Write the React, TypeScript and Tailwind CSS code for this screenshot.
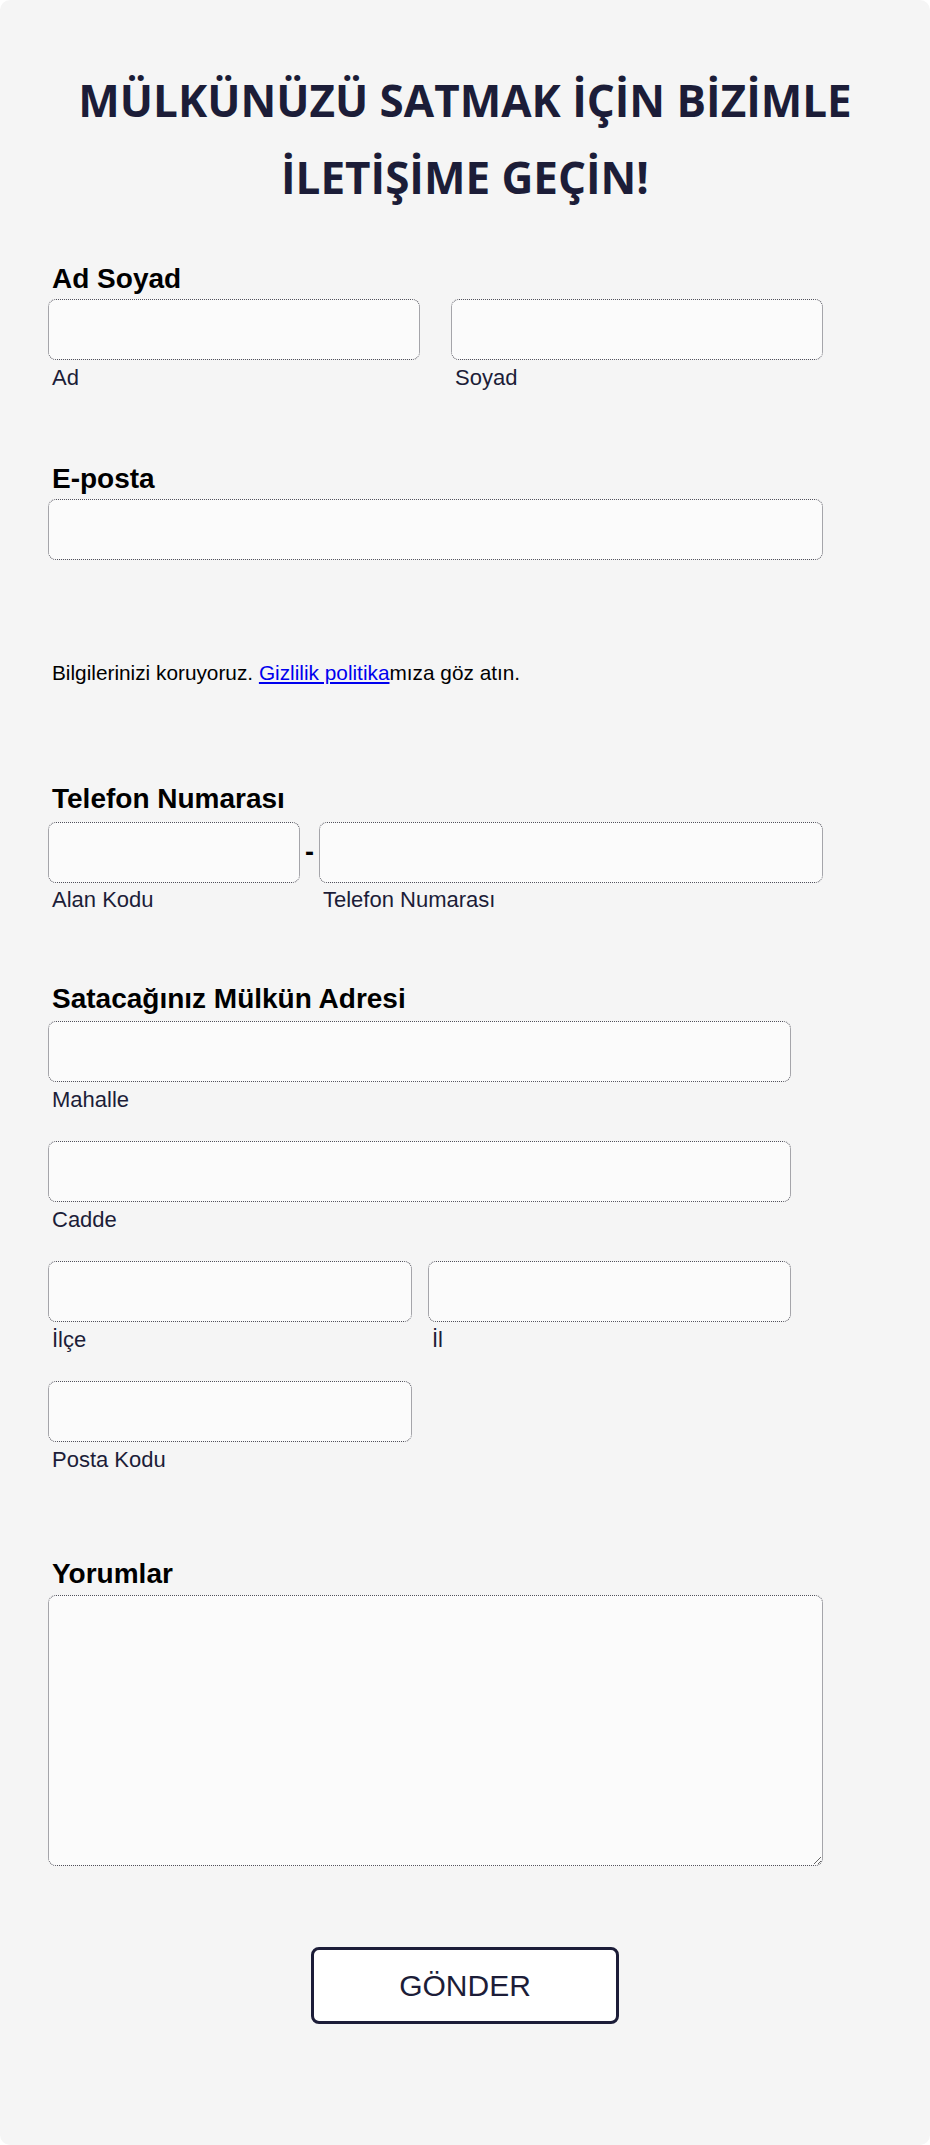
import React from "react";

const inputCls =
  "block bg-[#fbfbfb] border border-dotted border-[#50505a] rounded-[8px] outline-none";

function Label({ children, className = "" }: { children: React.ReactNode; className?: string }) {
  return (
    <div className={"pl-[4px] text-[28px] leading-[32px] font-bold text-black " + className}>
      {children}
    </div>
  );
}

function Sub({ children, className = "" }: { children: React.ReactNode; className?: string }) {
  return (
    <div className={"pl-[4px] text-[22px] leading-[25px] text-[#1c1d38] " + className}>
      {children}
    </div>
  );
}

export default function App() {
  return (
    <div className="bg-white w-[930px]" style={{ fontFamily: '"Liberation Sans", Arial, sans-serif' }}>
      <div className="bg-[#f5f5f5] rounded-[10px] w-[930px] h-[2145px] pt-[62px]">
        <h1
          className="text-center text-[44px] leading-[77px] font-bold text-[#1c1d38]"
          style={{ fontFamily: '"Open Sans", "Noto Sans", sans-serif' }}
        >
          MÜLKÜNÜZÜ SATMAK İÇİN BİZİMLE
          <br />
          İLETİŞİME GEÇİN!
        </h1>

        <div className="pl-[48px]">
          {/* Ad Soyad */}
          <Label className="mt-[47px]">Ad Soyad</Label>
          <div className="mt-[4px] flex gap-[31px] w-[775px]">
            <div className="w-[372px]">
              <input className={inputCls + " w-[372px] h-[61px]"} />
              <Sub className="mt-[5px]">Ad</Sub>
            </div>
            <div className="w-[372px]">
              <input className={inputCls + " w-[372px] h-[61px]"} />
              <Sub className="mt-[5px]">Soyad</Sub>
            </div>
          </div>

          {/* E-posta */}
          <Label className="mt-[73px]">E-posta</Label>
          <input className={inputCls + " mt-[4px] w-[775px] h-[61px]"} />

          <p className="mt-[101px] pl-[4px] text-[20.8px] leading-[24px] text-black">
            Bilgilerinizi koruyoruz.{" "}
            <a href="#" className="text-[#0000ee] underline">
              Gizlilik politika
            </a>
            mıza göz atın.
          </p>

          {/* Telefon */}
          <Label className="mt-[98px]">Telefon Numarası</Label>
          <div className="mt-[7px] flex w-[775px]">
            <div className="w-[252px]">
              <input className={inputCls + " w-[252px] h-[61px]"} />
              <Sub className="mt-[4px]">Alan Kodu</Sub>
            </div>
            <div className="w-[19px] h-[61px] flex items-center justify-center text-[27px] font-bold text-black">
              -
            </div>
            <div className="w-[504px]">
              <input className={inputCls + " w-[504px] h-[61px]"} />
              <Sub className="mt-[4px]">Telefon Numarası</Sub>
            </div>
          </div>

          {/* Adres */}
          <Label className="mt-[71px]">Satacağınız Mülkün Adresi</Label>
          <input className={inputCls + " mt-[6px] w-[743px] h-[61px]"} />
          <Sub className="mt-[5px]">Mahalle</Sub>
          <input className={inputCls + " mt-[29px] w-[743px] h-[61px]"} />
          <Sub className="mt-[5px]">Cadde</Sub>
          <div className="mt-[29px] flex gap-[16px] w-[743px]">
            <div className="w-[364px]">
              <input className={inputCls + " w-[364px] h-[61px]"} />
              <Sub className="mt-[5px]">İlçe</Sub>
            </div>
            <div className="w-[363px]">
              <input className={inputCls + " w-[363px] h-[61px]"} />
              <Sub className="mt-[5px]">İl</Sub>
            </div>
          </div>
          <input className={inputCls + " mt-[29px] w-[364px] h-[61px]"} />
          <Sub className="mt-[5px]">Posta Kodu</Sub>

          {/* Yorumlar */}
          <Label className="mt-[86px]">Yorumlar</Label>
          <textarea className={inputCls + " mt-[5px] w-[775px] h-[271px] resize"} />
        </div>

        <div className="mt-[81px] flex justify-center">
          <button className="w-[308px] h-[77px] bg-white border-[3px] border-[#1c1d38] rounded-[8px] text-[30px] text-[#1c1d38]">
            GÖNDER
          </button>
        </div>
      </div>
    </div>
  );
}
